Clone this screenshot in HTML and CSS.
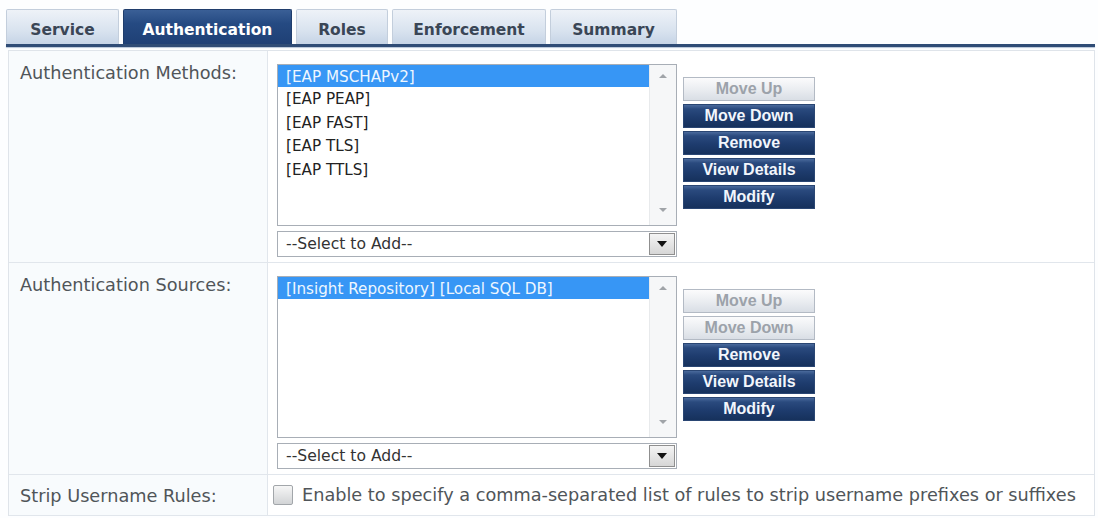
FILE: index.html
```html
<!DOCTYPE html>
<html lang="en">
<head>
  <meta charset="UTF-8" />
  <title>Service - Authentication</title>
  <link rel="stylesheet" href="styles.css">
</head>
<body>
  <div class="tabs">
    <div class="tab tab-service">Service</div>
    <div class="tab tab-auth active">Authentication</div>
    <div class="tab tab-roles">Roles</div>
    <div class="tab tab-enf">Enforcement</div>
    <div class="tab tab-summary">Summary</div>
  </div>
  <div class="tab-line"></div>

  <div class="form">

    <div class="row">
      <div class="label">Authentication Methods:</div>
      <div class="value">
        <div class="lists">
          <div class="listbox">
            <ul class="items">
              <li class="sel">[EAP MSCHAPv2]</li>
              <li>[EAP PEAP]</li>
              <li>[EAP FAST]</li>
              <li>[EAP TLS]</li>
              <li>[EAP TTLS]</li>
            </ul>
            <div class="scroll"><span class="up"></span><span class="down"></span></div>
          </div>
          <div class="select">
            <span>--Select to Add--</span>
            <span class="arrow"></span>
          </div>
        </div>
        <div class="buttons">
          <button class="btn off">Move Up</button>
          <button class="btn">Move Down</button>
          <button class="btn">Remove</button>
          <button class="btn">View Details</button>
          <button class="btn">Modify</button>
        </div>
      </div>
    </div>

    <div class="row">
      <div class="label">Authentication Sources:</div>
      <div class="value">
        <div class="lists">
          <div class="listbox">
            <ul class="items">
              <li class="sel">[Insight Repository] [Local SQL DB]</li>
            </ul>
            <div class="scroll"><span class="up"></span><span class="down"></span></div>
          </div>
          <div class="select">
            <span>--Select to Add--</span>
            <span class="arrow"></span>
          </div>
        </div>
        <div class="buttons">
          <button class="btn off">Move Up</button>
          <button class="btn off">Move Down</button>
          <button class="btn">Remove</button>
          <button class="btn">View Details</button>
          <button class="btn">Modify</button>
        </div>
      </div>
    </div>

    <div class="row row-strip">
      <div class="label">Strip Username Rules:</div>
      <div class="value">
        <label class="check"><span class="box"></span>Enable to specify a comma-separated list of rules to strip username prefixes or suffixes</label>
      </div>
    </div>

  </div>
</body>
</html>
```

FILE: styles.css
```css
body {
  margin: 0;
  background: #fdfeff;
  font-family: "DejaVu Sans", Verdana, sans-serif;
}

/* tab strip */
.tabs {
  display: flex;
  gap: 4px;
  padding: 9px 0 0 6px;
  height: 35px;
}

.tab {
  box-sizing: border-box;
  height: 35px;
  padding-top: 5px;
  display: flex;
  align-items: center;
  justify-content: center;
  font-weight: bold;
  font-size: 15.5px;
  color: #3a4656;
  background: linear-gradient(#eef2f8, #d9e3ef 60%, #c6d4e6);
  border: 1px solid #c3cedc;
  border-bottom: none;
  border-radius: 2px 2px 0 0;
}

.tab.active {
  color: #fff;
  background: linear-gradient(#3a5f96, #254a82 40%, #1f4075);
  border-color: #1f3d6c;
}

.tab-service { width: 113px; }
.tab-auth { width: 169px; }
.tab-roles { width: 92px; }
.tab-enf { width: 154px; }
.tab-summary { width: 127px; }

.tab-line {
  height: 3px;
  margin: 0 3px 0 6px;
  background: #2f4c76;
  box-shadow: 0 1px 1px #b7c5d8;
}

/* form table */
.form {
  margin: 3px 3px 0 8px;
  border: 1px solid #dfe4ea;
  border-bottom: none;
}

.row {
  display: flex;
  border-bottom: 1px solid #e1e6ec;
}

.label {
  box-sizing: border-box;
  width: 259px;
  padding: 11px 0 0 11px;
  line-height: 22px;
  font-size: 17.7px;
  color: #505559;
  background: #f8fbfd;
  border-right: 1px solid #e1e6ec;
}

.value {
  flex: 1;
  display: flex;
  align-items: flex-start;
  padding: 13px 0 5px 9px;
  background: #fff;
}

.lists {
  width: 400px;
}

.listbox {
  display: flex;
  height: 162px;
  box-sizing: border-box;
  border: 1px solid #a8aeb6;
  background: #fff;
}

.items {
  flex: 1;
  list-style: none;
  margin: 0;
  padding: 0;
  font-size: 15.2px;
  color: #222;
}

.items li {
  padding: 2px 0 0 8px;
  line-height: 21.5px;
}

.items li.sel {
  background: #3796f5;
  color: #eef6ff;
  line-height: 20px;
}

.scroll {
  width: 26px;
  position: relative;
  background: #f6f7f8;
  border-left: 1px solid #e8eaec;
}

.scroll .up, .scroll .down {
  position: absolute;
  left: 9px;
  width: 0;
  height: 0;
  border-left: 4px solid transparent;
  border-right: 4px solid transparent;
}

.scroll .up {
  top: 9px;
  border-bottom: 4px solid #a0a4a8;
}

.scroll .down {
  bottom: 13px;
  border-top: 4px solid #a0a4a8;
}

.select {
  display: flex;
  align-items: center;
  justify-content: space-between;
  margin-top: 5px;
  height: 26px;
  box-sizing: border-box;
  border: 1px solid #a8aeb6;
  background: #fff;
  font-size: 15.6px;
  color: #333;
  padding-left: 8px;
}

.select .arrow {
  align-self: stretch;
  width: 26px;
  margin: 1px;
  display: flex;
  align-items: center;
  justify-content: center;
  background: linear-gradient(#f4f4f4, #d6d6d6);
  border: 1px solid #8f8f8f;
  box-sizing: border-box;
}

.select .arrow::after {
  content: "";
  border-left: 5px solid transparent;
  border-right: 5px solid transparent;
  border-top: 6px solid #111;
}

/* action buttons */
.buttons {
  display: flex;
  flex-direction: column;
  gap: 3px;
  margin: 13px 0 0 6px;
}

.btn {
  width: 132px;
  height: 24px;
  padding: 0;
  font-family: "Liberation Sans", Arial, sans-serif;
  font-weight: bold;
  font-size: 16px;
  color: #f2f6fc;
  background: linear-gradient(#4a6a9c, #2a4a7e 18%, #1e3c6e 55%, #16315c);
  border: 1px solid #2a4673;
}

.btn.off {
  color: #9ca2aa;
  background: linear-gradient(#fbfbfc, #e9ecf0 55%, #d9dee5);
  border: 1px solid #b3bac4;
}

/* last row */
.row-strip .label {
  padding-top: 2px;
  display: flex;
  align-items: center;
  height: 40px;
}

.row-strip .value {
  padding: 0 0 0 5px;
  align-items: center;
}

.check {
  display: flex;
  align-items: center;
  gap: 9px;
  font-size: 17.7px;
  color: #505559;
}

.check .box {
  width: 20px;
  height: 20px;
  box-sizing: border-box;
  border: 1px solid #a2a6aa;
  border-radius: 2px;
  background: linear-gradient(#f6f6f6, #d2d4d6);
}
```
